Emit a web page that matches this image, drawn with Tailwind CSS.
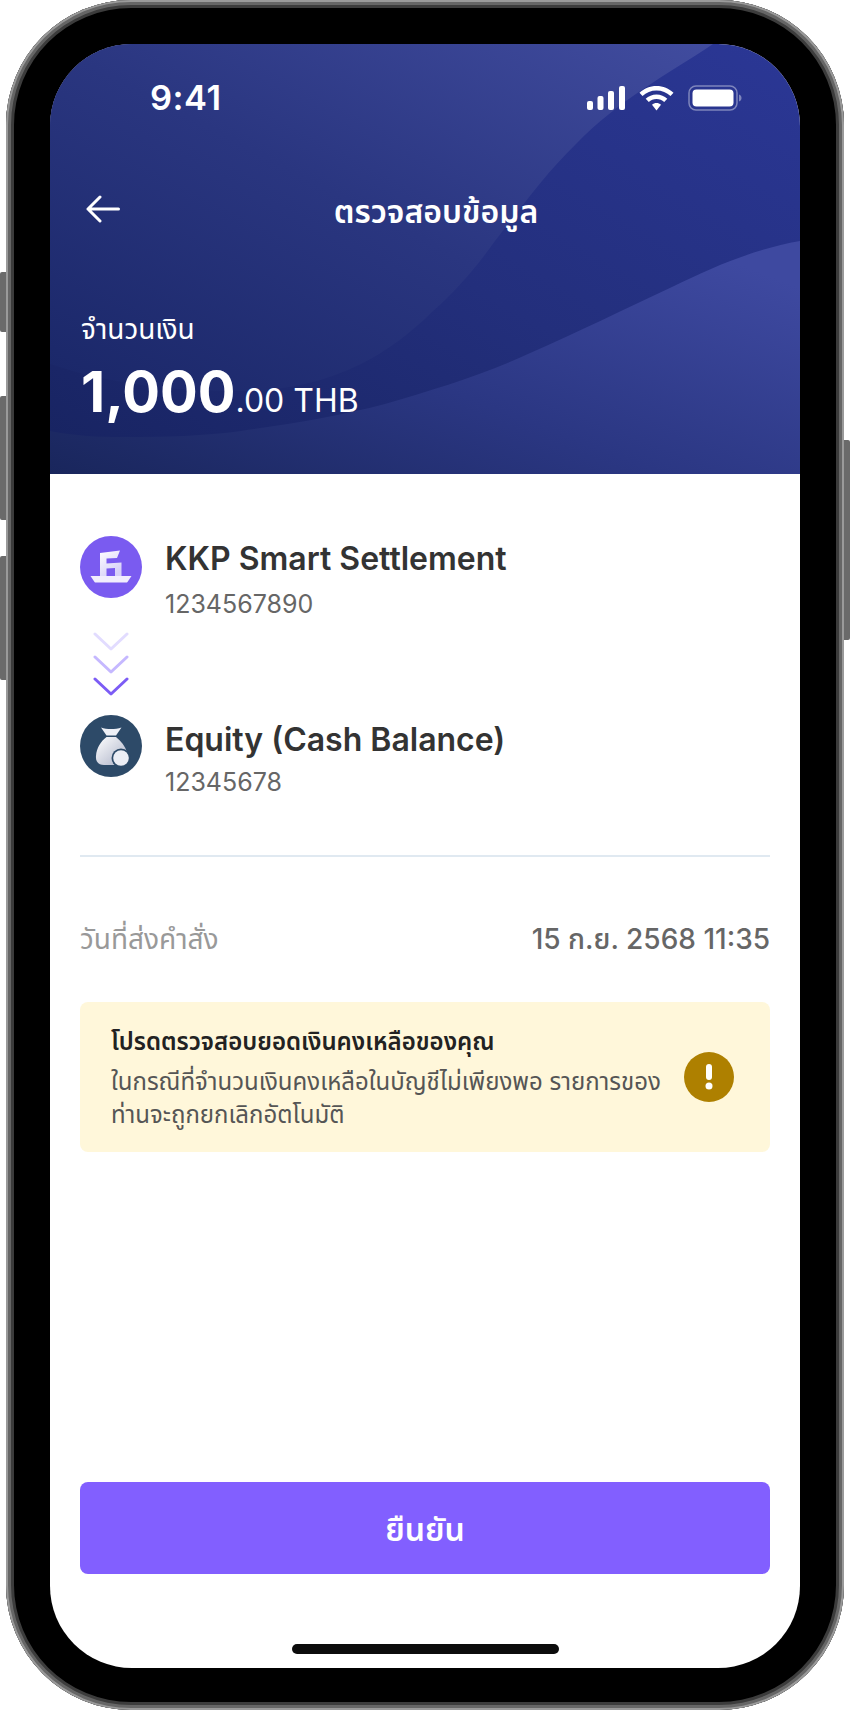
<!DOCTYPE html>
<html lang="th">
  <head>
    <meta charset="UTF-8" />
    <meta name="viewport" content="width=device-width, initial-scale=1.0" />
    <script src="https://cdn.jsdelivr.net/npm/@tailwindcss/browser@4"></script>
    <title>ตรวจสอบข้อมูล</title>
  </head>
  <body class="bg-white font-['Inter','Noto_Sans','Noto_Sans_Thai',sans-serif]">
    <div class="relative w-[850px] h-[1712px] overflow-hidden">
      <!-- side buttons -->
      <div class="absolute left-0 top-[272px] w-[7px] h-[60px] rounded-l-[2px] bg-[#6a6a6a]"></div>
      <div class="absolute left-0 top-[396px] w-[7px] h-[124px] rounded-l-[2px] bg-[#6a6a6a]"></div>
      <div class="absolute left-0 top-[556px] w-[7px] h-[124px] rounded-l-[2px] bg-[#6a6a6a]"></div>
      <div class="absolute right-0 top-[440px] w-[7px] h-[200px] rounded-r-[2px] bg-[#6a6a6a]"></div>

      <!-- phone frame -->
      <div class="relative ml-[6px] w-[838px] h-[1710px] pt-[44px] pl-[44px] rounded-[125px] bg-black shadow-[inset_0_0_0_2px_#9a9a9a,inset_0_0_0_5px_#666,inset_0_0_0_8px_#3c3c3c]">
        <div class="w-[750px] h-[1624px] rounded-[82px] overflow-hidden bg-white flex flex-col">
          <!-- header -->
          <div class="relative h-[430px] shrink-0 text-white bg-gradient-to-tr from-[#172360] via-[#232f7c] to-[#2b3796]">
            <svg class="absolute inset-0" width="750" height="430" viewBox="0 0 750 430">
              <defs>
                <linearGradient id="topWave" x1="0" y1="1" x2="1" y2="0">
                  <stop offset="0" stop-color="#1a2768" />
                  <stop offset="0.5" stop-color="#2a3680" />
                  <stop offset="1" stop-color="#414c9f" />
                </linearGradient>
                <linearGradient id="lowWave" x1="0" y1="1" x2="1" y2="0.2">
                  <stop offset="0" stop-color="#19265c" />
                  <stop offset="0.5" stop-color="#2b3783" />
                  <stop offset="1" stop-color="#3e49a0" />
                </linearGradient>
              </defs>
              <path d="M0 0H663C615 32 570 55 526 100C495 130 470 165 445 197C425 225 405 248 383 267C360 290 335 308 311 320C270 340 230 347 191 347C120 347 60 340 0 320Z" fill="url(#topWave)" />
              <path d="M0 387C25 392 50 393 72 393C115 393 155 392 191 387C240 380 290 372 335 360C385 345 430 332 478 310C530 287 575 265 622 243C665 222 705 205 750 197V430H0Z" fill="url(#lowWave)" />
            </svg>

            <div class="relative">
              <!-- status bar -->
              <div class="h-[66px] pt-[42px] pl-[100px] pr-[58px] flex justify-between items-center">
                <span class="text-[34.5px] leading-none font-semibold tracking-[0.5px]">9:41</span>
                <div class="flex items-center gap-[14px]">
                  <svg width="38" height="24" viewBox="0 0 38 24" fill="#fff">
                    <rect x="0" y="15" width="6" height="9" rx="2" />
                    <rect x="10.500" y="10" width="6" height="14" rx="2" />
                    <rect x="21" y="5" width="6" height="19" rx="2" />
                    <rect x="32" y="0" width="6" height="24" rx="2" />
                  </svg>
                  <svg width="35" height="25" viewBox="0 0 35 25" fill="#fff">
                    <path d="M17.500 0C24 0 30 2.500 34.500 6.800L31.500 10C27.800 6.500 22.900 4.500 17.500 4.500S7.200 6.500 3.500 10L.5 6.800C5 2.500 11 0 17.500 0Z" />
                    <path d="M17.500 8.500C21.700 8.500 25.500 10.100 28.300 12.800L25.200 16C23.200 14.100 20.500 13 17.500 13S11.800 14.100 9.800 16L6.700 12.800C9.500 10.100 13.300 8.500 17.500 8.500Z" />
                    <path d="M17.500 17C19.200 17 20.800 17.600 22 18.800L17.500 24.500L13 18.800C14.200 17.600 15.800 17 17.500 17Z" />
                  </svg>
                  <svg width="54" height="26" viewBox="0 0 54 26">
                    <rect x="1" y="1" width="48" height="24" rx="7" fill="none" stroke="#fff" stroke-opacity="0.4" stroke-width="1.500" />
                    <rect x="4.500" y="4.500" width="41" height="17" rx="4" fill="#fff" />
                    <path d="M51 9.500C52.500 10 53.500 11.300 53.500 13S52.500 16 51 16.500Z" fill="#fff" fill-opacity="0.4" />
                  </svg>
                </div>
              </div>

              <!-- nav -->
              <div class="mt-[77px] h-[44px] px-[36px] relative flex items-center justify-center">
                <svg class="absolute left-[36px] top-[8px]" width="34" height="28" viewBox="0 0 34 28" fill="none" stroke="#fff" stroke-width="3" stroke-linecap="round" stroke-linejoin="round">
                  <path d="M32.500 14H2M14 2L2 14L14 26" />
                </svg>
                <h1 class="mt-[6px] ml-[22px] text-[32px] leading-none font-semibold">ตรวจสอบข้อมูล</h1>
              </div>

              <!-- amount -->
              <div class="mt-[80px] pl-[31px]">
                <p class="text-[28px] leading-[36px]">จำนวนเงิน</p>
                <p class="mt-[15px] leading-[60px]">
                  <span class="text-[56px] font-bold">1,000</span><span class="text-[32px]">.00 THB</span>
                </p>
              </div>
            </div>
          </div>

          <!-- body -->
          <div class="flex-1 flex flex-col px-[30px] text-[#333]">
            <!-- from -->
            <div class="mt-[62px] flex gap-[23px] h-[72px]">
              <div class="w-[62px] h-[62px] shrink-0">
                <svg width="62" height="62" viewBox="0 0 62 62">
                  <defs>
                    <linearGradient id="kkpMark" x1="0" y1="0" x2="0.6" y2="1">
                      <stop offset="0" stop-color="#fff" />
                      <stop offset="1" stop-color="#d6d0f8" />
                    </linearGradient>
                  </defs>
                  <circle cx="31" cy="31" r="31" fill="#7a5bf0" />
                  <path d="M20 17L40 14.500L37 22L26.500 22.500V27.500L41.500 26.500V40H35V32L26.500 32.500V40H20Z" fill="url(#kkpMark)" />
                  <path d="M10.500 40H51.500L47.500 46Q47 46.500 46 46.500H16Q15 46.500 14.500 46Z" fill="#f1eefd" />
                </svg>
              </div>
              <div>
                <p class="text-[32px] leading-[46px] font-semibold">KKP Smart Settlement</p>
                <p class="mt-[6px] text-[25px] leading-[32px] text-[#666]">1234567890</p>
              </div>
            </div>

            <!-- arrows -->
            <div class="mt-[24px] w-[62px] flex flex-col items-center gap-[3.5px]">
              <svg width="36" height="19" viewBox="0 0 36 19" fill="none" stroke="#e2dcff" stroke-width="3" stroke-linecap="round" stroke-linejoin="round"><path d="M2 2L18 17L34 2" /></svg>
              <svg width="36" height="19" viewBox="0 0 36 19" fill="none" stroke="#c5b8ff" stroke-width="3" stroke-linecap="round" stroke-linejoin="round"><path d="M2 2L18 17L34 2" /></svg>
              <svg width="36" height="19" viewBox="0 0 36 19" fill="none" stroke="#7c5cf5" stroke-width="3" stroke-linecap="round" stroke-linejoin="round"><path d="M2 2L18 17L34 2" /></svg>
            </div>

            <!-- to -->
            <div class="mt-[19px] flex gap-[23px] h-[72px]">
              <div class="w-[62px] h-[62px] shrink-0">
                <svg width="62" height="62" viewBox="0 0 62 62">
                  <defs>
                    <linearGradient id="bagFill" x1="0" y1="0" x2="1" y2="1">
                      <stop offset="0" stop-color="#fff" />
                      <stop offset="1" stop-color="#aab0c6" />
                    </linearGradient>
                  </defs>
                  <circle cx="31" cy="31" r="31" fill="#2d4a68" />
                  <path d="M21 12.500C27 14.500 35 14.500 41.500 12.500L36 20.500H26.500Z" fill="#eef0f6" />
                  <path d="M26.500 22H36C41 26 45 31 47 37L40 50H24C18 50 15.500 46 16 41C16.500 33 21 26 26.500 22Z" fill="url(#bagFill)" />
                  <circle cx="41" cy="43" r="9.500" fill="#2d4a68" />
                  <circle cx="41" cy="43" r="7.800" fill="#eceef5" />
                </svg>
              </div>
              <div class="mt-[2px]">
                <p class="text-[32px] leading-[46px] font-semibold">Equity (Cash Balance)</p>
                <p class="mt-[3px] text-[25px] leading-[32px] text-[#666]">12345678</p>
              </div>
            </div>

            <div class="mt-[68px] h-[2px] bg-[#e0e9f1]"></div>

            <!-- date row -->
            <div class="mt-[64px] flex justify-between items-center h-[36px]">
              <span class="text-[28px] text-[#999]">วันที่ส่งคำสั่ง</span>
              <span class="text-[28px] font-medium text-[#666]">15 ก.ย. 2568 11:35</span>
            </div>

            <!-- warning -->
            <div class="mt-[45px] h-[150px] rounded-[8px] bg-[#fff7da] pl-[31px] pr-[36px] flex items-center justify-between">
              <div class="w-[560px]">
                <p class="text-[24px] leading-[36px] font-semibold text-[#222]">โปรดตรวจสอบยอดเงินคงเหลือของคุณ</p>
                <p class="mt-[5px] text-[24px] leading-[33px] text-[#555]">ในกรณีที่จำนวนเงินคงเหลือในบัญชีไม่เพียงพอ รายการของท่านจะถูกยกเลิกอัตโนมัติ</p>
              </div>
              <div class="w-[50px] h-[50px] rounded-full bg-[#ae8000] flex items-center justify-center">
                <svg width="8" height="26" viewBox="0 0 8 26" fill="#fff">
                  <rect x="1" y="0" width="6" height="16" rx="3" />
                  <circle cx="4" cy="22" r="3.500" />
                </svg>
              </div>
            </div>

            <!-- confirm -->
            <button class="mt-auto h-[92px] w-full pt-[4px] rounded-[8px] bg-[#825fff] text-white text-[32px] font-semibold">ยืนยัน</button>

            <div class="mt-[70px] mb-[14px] mx-auto w-[267px] h-[10px] rounded-full bg-[#0c0c0c]"></div>
          </div>
        </div>
      </div>
    </div>
  </body>
</html>
